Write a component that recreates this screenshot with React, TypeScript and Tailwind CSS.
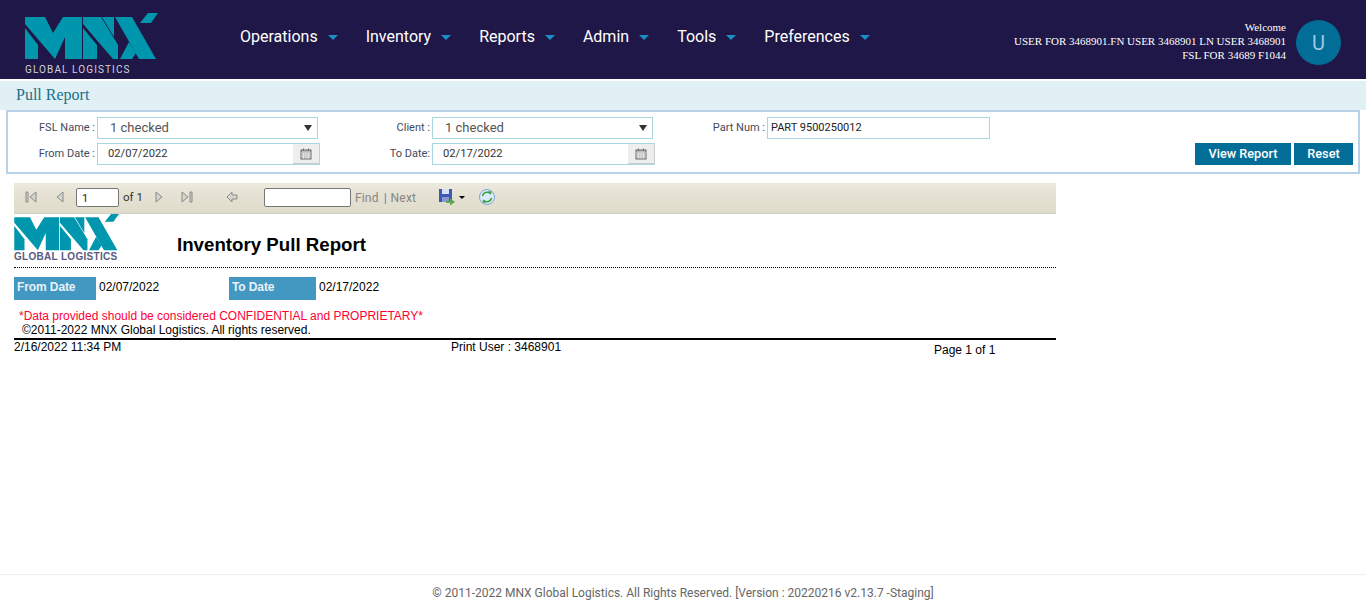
const navItems = ["Operations", "Inventory", "Reports", "Admin", "Tools", "Preferences"];

function LogoMark({ className }: { className: string }) {
  return (
    <svg viewBox="0 0 134 47" className={className} fill="#0097ae">
      {/* M */}
      <polygon points="0,4 20,4 28,20 38,4 57,4 57,46 40,46 40,24 30,46 0,11" />
      <polygon points="0,15 13,32 13,46 0,46" />
      {/* N */}
      <polygon points="58,4 76,4 93,32 93,46 88,46 58,11" />
      <polygon points="58,15 72,32 72,46 58,46" />
      <polygon points="77,4 89,4 89,24" />
      {/* X */}
      <polygon points="90,4 107,4 131,46 114,46" />
      <polygon points="95,46 104,29 111,40 107,46" />
      <polygon points="115,10 123,0 133,0 126,10" />
    </svg>
  );
}

function Select({ label, labelW }: { label: string; labelW: string }) {
  return (
    <div className="flex items-center">
      <span className={`${labelW} pr-[2px] text-right text-[11px] text-[#444a5c]`}>{label}</span>
      <div className="flex h-[22px] w-[221px] items-center justify-between border border-[#a9d6df] bg-white pl-[12px] pr-[5px] text-[13px] text-[#555]">
        <span>1 checked</span>
        <span className="h-0 w-0 border-x-[4px] border-t-[6px] border-x-transparent border-t-[#333]" />
      </div>
    </div>
  );
}

function CalendarIcon() {
  return (
    <svg viewBox="0 0 12 12" className="h-[12px] w-[12px]" fill="none" stroke="#666" strokeWidth="1">
      <rect x="1" y="2" width="10" height="9" fill="#bbb" />
      <path d="M1 5H11M1 7H11M1 9H11M3.5 5V11M6 5V11M8.5 5V11" stroke="#eee" strokeWidth="0.6" />
      <path d="M3.5 0.5V2.5M8.5 0.5V2.5" />
    </svg>
  );
}

function DateInput({ label, value, labelW }: { label: string; value: string; labelW: string }) {
  return (
    <div className="flex items-center">
      <span className={`${labelW} pr-[2px] text-right text-[11px] text-[#444a5c]`}>{label}</span>
      <div className="flex h-[22px] w-[223px] border border-[#a9d6df] border-r-[#ccc] bg-white text-[11.2px] text-[#333]">
        <span className="flex-1 pl-[10px] leading-[20px]">{value}</span>
        <span className="flex w-[26px] items-center justify-center border-b border-[#ccc] bg-[#eee]">
          <CalendarIcon />
        </span>
      </div>
    </div>
  );
}

function PagerIcon({ d }: { d: string }) {
  return (
    <svg viewBox="0 0 14 14" className="h-[14px] w-[14px]" fill="#d4d4d0" stroke="#8a8a86" strokeWidth="1">
      <path d={d} />
    </svg>
  );
}

export default function App() {
  return (
    <div className="flex h-[612px] flex-col bg-white font-['Roboto',sans-serif]">
      <header className="flex h-[79px] shrink-0 bg-[#1f1747]">
        <div className="ml-[25px] w-[215px] pt-[13px]">
          <LogoMark className="h-[47px] w-[134px]" />
          <p className="mt-[4px] text-[10px] leading-[12px] tracking-[1.1px] text-[#d4d4d8]">GLOBAL LOGISTICS</p>
        </div>
        <nav className="flex flex-1 items-start gap-[28px] pt-[27px]">
          {navItems.map((item) => (
            <div key={item} className="flex items-center gap-[10px] text-[16px] leading-[19px] text-white">
              {item}
              <span className="mt-[2px] h-0 w-0 border-x-[5px] border-t-[5px] border-x-transparent border-t-[#1b8fc4]" />
            </div>
          ))}
        </nav>
        <div className="flex items-start pt-[20px] pr-[25px]">
          <div className="text-right font-['Liberation_Serif',serif] text-[11px] leading-[14px] text-white">
            <p>Welcome</p>
            <p>USER FOR 3468901.FN USER 3468901 LN USER 3468901</p>
            <p>FSL FOR 34689 F1044</p>
          </div>
          <div className="ml-[10px] flex h-[45px] w-[45px] items-center justify-center rounded-full bg-[#026d97] text-[20px] text-[#9ecbe0]">
            U
          </div>
        </div>
      </header>

      <div className="mt-[2px] h-[29px] shrink-0 bg-[#e0f0f5] pl-[16px] font-['Liberation_Serif',serif] text-[16px] leading-[28px] text-[#1b6f8c]">
        Pull Report
      </div>

      <section className="mx-[6px] flex h-[64px] shrink-0 border-2 border-[#b8d0e8] bg-white">
        <div className="flex flex-col gap-[4px] pt-[5px]">
          <Select label="FSL Name :" labelW="w-[89px]" />
          <DateInput label="From Date :" labelW="w-[89px]" value="02/07/2022" />
        </div>
        <div className="ml-[9px] flex flex-col gap-[4px] pt-[5px]">
          <Select label="Client :" labelW="w-[103px]" />
          <DateInput label="To Date:" labelW="w-[103px]" value="02/17/2022" />
        </div>
        <div className="ml-[10px] flex-1 pt-[5px]">
          <div className="flex items-center">
            <span className="w-[102px] pr-[2px] text-right text-[11px] text-[#444a5c]">Part Num :</span>
            <div className="flex h-[22px] w-[223px] items-center border border-[#a9d6df] pl-[3px] text-[11px] text-[#222]">PART 9500250012</div>
          </div>
        </div>
        <div className="flex items-end gap-[3px] pr-[5px] pb-[7px]">
          <button className="h-[22px] w-[96px] bg-[#026d97] pb-[1px] text-[12.7px] font-medium text-white">View Report</button>
          <button className="h-[22px] w-[59px] bg-[#026d97] pb-[1px] text-[12.7px] font-medium text-white">Reset</button>
        </div>
      </section>

      <main className="ml-[14px] mt-[9px] w-[1042px] flex-1 font-['Liberation_Sans',sans-serif]">
        <div className="flex h-[31px] items-center border-b border-[#cfcdc4] bg-gradient-to-b from-[#ece9de] via-[#e4e1d2] to-[#dfdccb] pb-[2px] pl-[10px] font-['Roboto',sans-serif]">
          <PagerIcon d="M2 2V12H4V2ZM12 2L6 7L12 12Z" />
          <span className="ml-[15px]"><PagerIcon d="M10 2L4 7L10 12Z" /></span>
          <input readOnly value="1" className="ml-[9px] h-[19px] w-[43px] rounded-[2px] border border-[#777] bg-white pl-[5px] pt-[2px] text-[11px] text-[#222]" />
          <span className="ml-[4px] mt-[2px] text-[11.5px] text-[#333]">of 1</span>
          <span className="ml-[9px]"><PagerIcon d="M4 2L10 7L4 12Z" /></span>
          <span className="ml-[14px]"><PagerIcon d="M2 2L8 7L2 12ZM10 2V12H12V2Z" /></span>
          <span className="ml-[31px]"><PagerIcon d="M2 7L7 2V5H12V9H7V12Z" /></span>
          <input readOnly className="ml-[25px] h-[19px] w-[87px] rounded-[2px] border border-[#777] bg-white" />
          <span className="ml-[4px] mt-[2px] text-[12px] tracking-[0.2px] text-[#858583]">Find</span>
          <span className="ml-[5px] mr-[4px] mt-[2px] text-[12px] font-medium text-[#4a8fc0]">|</span>
          <span className="mt-[2px] text-[12px] tracking-[0.2px] text-[#858583]">Next</span>
          <svg viewBox="0 0 18 18" className="ml-[22px] h-[18px] w-[18px]">
            <rect x="1" y="1" width="13" height="13" fill="#3c58b8" />
            <rect x="4" y="1" width="7" height="5" fill="#d9e0f4" />
            <rect x="4" y="9" width="7" height="5" fill="#8797cf" />
            <path d="M8 13H12V10L17 14L12 17.5V15H8Z" fill="#5fa84f" />
          </svg>
          <span className="ml-[3px] h-0 w-0 border-x-[3px] border-t-[3px] border-x-transparent border-t-black" />
          <svg viewBox="0 0 18 18" className="ml-[13px] h-[18px] w-[18px]" fill="none">
            <circle cx="9" cy="9" r="7.5" fill="#dcebf8" stroke="#7fa6d8" />
            <path d="M4.5 8A4.5 4.5 0 0 1 12 5.5M13.5 10A4.5 4.5 0 0 1 6 12.5" stroke="#3f9e3f" strokeWidth="1.6" />
            <path d="M10 3L13.5 3.5L13 7ZM8 15L4.5 14.5L5 11Z" fill="#3f9e3f" />
          </svg>
        </div>

        <div className="flex h-[54px] items-start border-b border-dotted border-black">
          <div className="w-[163px]">
            <LogoMark className="h-[37px] w-[106px]" />
            <p className="text-[10px] font-bold leading-[11px] tracking-[0.3px] text-[#5a5a80]">GLOBAL LOGISTICS</p>
          </div>
          <h1 className="pt-[19px] text-[18.7px] font-bold leading-[24px] text-black">Inventory Pull Report</h1>
        </div>

        <div className="mt-[9px] flex h-[23px] items-start text-[12px] text-black">
          <div className="h-[23px] w-[82px] bg-[#4398c2] pl-[3px] font-bold leading-[20px] tracking-[-0.1px] text-[#e6f2f8]">From Date</div>
          <div className="w-[133px] pl-[3px] leading-[20px]">02/07/2022</div>
          <div className="h-[23px] w-[87px] bg-[#4398c2] pl-[3px] font-bold leading-[20px] tracking-[-0.1px] text-[#e6f2f8]">To Date</div>
          <div className="pl-[3px] leading-[20px]">02/17/2022</div>
        </div>

        <p className="mt-[9px] pl-[5px] text-[12px] leading-[14px] text-[#ff0033]">*Data provided should be considered CONFIDENTIAL and PROPRIETARY*</p>
        <p className="pl-[8px] text-[12px] leading-[14px] text-black">©2011-2022 MNX Global Logistics. All rights reserved.</p>

        <div className="mt-[1px] flex border-t-2 border-black text-[12px] leading-[14px] text-black">
          <span className="w-[437px]">2/16/2022 11:34 PM</span>
          <span className="w-[483px]">Print User : 3468901</span>
          <span className="mt-[3px]">Page 1 of 1</span>
        </div>
      </main>

      <footer className="h-[38px] shrink-0 border-t border-[#eee] text-center text-[12px] leading-[36px] text-[#666]">
        © 2011-2022 MNX Global Logistics. All Rights Reserved. [Version : 20220216 v2.13.7 -Staging]
      </footer>
    </div>
  );
}
